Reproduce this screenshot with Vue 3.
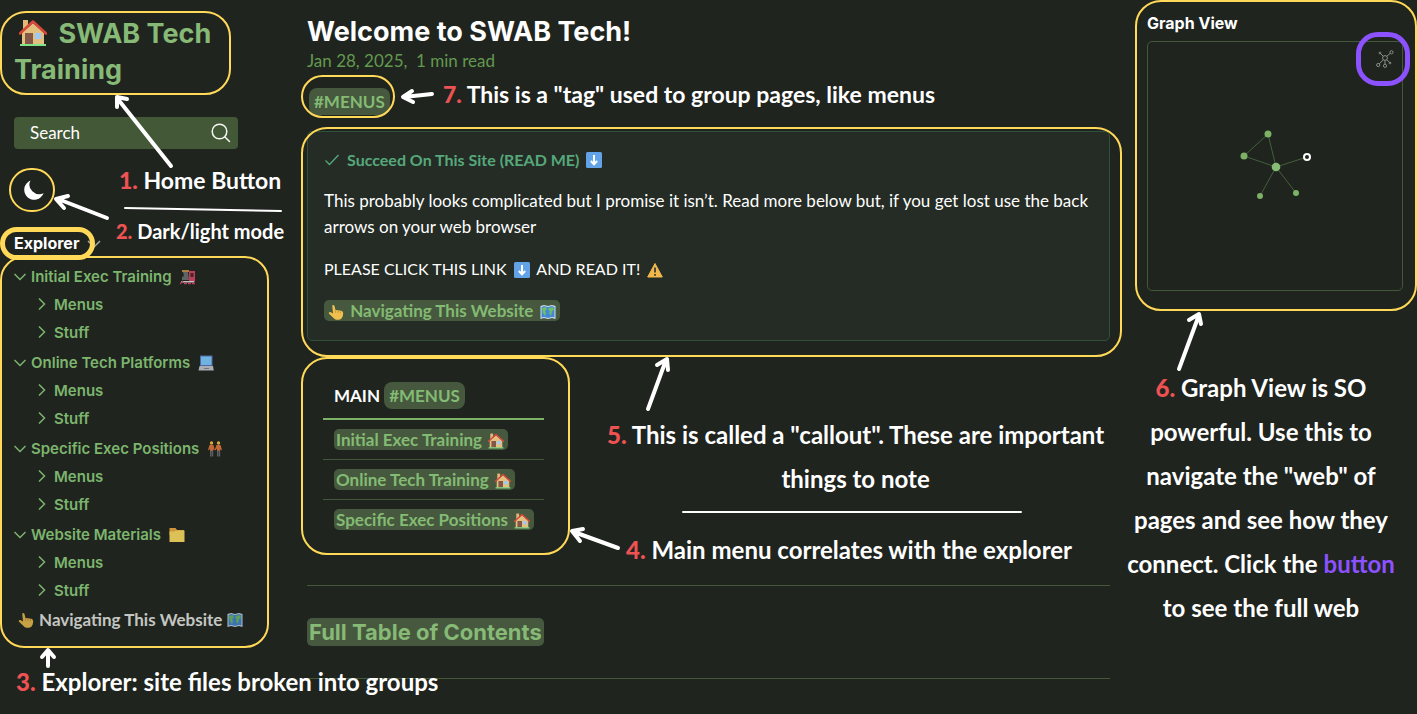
<script setup>
const groups = [
  { name: 'Initial Exec Training', icon: 'train' },
  { name: 'Online Tech Platforms', icon: 'laptop' },
  { name: 'Specific Exec Positions', icon: 'people' },
  { name: 'Website Materials', icon: 'folder' }
]
const children = ['Menus', 'Stuff']
const menuRows = ['Initial Exec Training', 'Online Tech Training', 'Specific Exec Positions']

const hub = { x: 128, y: 125 }
const nodes = [
  { x: 120, y: 92, r: 3.5 },
  { x: 96, y: 114, r: 3.5 },
  { x: 112, y: 154, r: 3 },
  { x: 148, y: 151, r: 3 }
]
</script>

<template>
  <div class="page">
    <svg class="defs" width="0" height="0" aria-hidden="true">
      <symbol id="e-house" viewBox="0 0 28 28">
        <rect x="4" y="1" width="5" height="12" fill="#e0b878" />
        <path d="M3 14 14 4l11 10v12H3z" fill="#e3c07f" />
        <path d="M1 14.500 14 2.500l13 12" fill="none" stroke="#d8473c" stroke-width="2.600" stroke-linecap="round" stroke-linejoin="round" />
        <rect x="6" y="14" width="8" height="12" fill="#855748" />
        <rect x="16" y="14" width="6" height="6" fill="#9ec9f7" />
        <path d="M1 25h26v2H1z" fill="#82e288" />
      </symbol>
      <symbol id="e-down" viewBox="0 0 16 16">
        <rect width="16" height="16" rx="1.500" fill="#62a3e8" />
        <path d="M8 3v9M4.800 9 8 12.300 11.200 9" fill="none" stroke="#fff" stroke-width="2" />
      </symbol>
      <symbol id="e-warn" viewBox="0 0 16 16">
        <path d="M8 1.500 15.300 15H.7z" fill="#f2b84b" stroke="#f2b84b" stroke-linejoin="round" />
        <path d="M8 5.500v5M8 12v1.800" stroke="#333" stroke-width="1.700" />
      </symbol>
      <symbol id="e-hand" viewBox="0 0 16 16">
        <path d="M4.200 1.500q1.300-1 2.200.3L7.500 6l6 .8q1.800.6 1.700 2.600l-.5 3.200Q13.800 15.500 11 15.700H8q-1.600-.2-2.500-1.600L.8 9.500q-.4-1.700 1.500-1.600L5 9.400z" fill="#efc04f" />
        <path d="M7.500 6.500v2.200M10 7v2M12.500 7.200v1.900" stroke="#c48f35" stroke-width=".8" />
      </symbol>
      <symbol id="e-map" viewBox="0 0 16 16">
        <path d="M.5 2 4 1l4 1 4-1 3.500 1v13L12 14l-4 1-4-1-3.500 1z" fill="#d7e3ee" />
        <path d="M1.500 3 4 2l4 1 4-1 2.500 1v10.500L12 13l-4 1-4-1-2.500.8z" fill="#4389d6" />
        <path d="M2 4l4-1 1 2-2 2 1 2-1 3-2-3zM9 4l4-1 1 3-2 1-1 5-2-3 1-2-2-1z" fill="#6fbf68" />
      </symbol>
      <symbol id="e-train" viewBox="0 0 16 16">
        <path d="M2 1h7v2H2z" fill="#b78945" />
        <path d="M3 3h5l1 8H2V8l2-1z" fill="#666a6c" />
        <path d="M9 2h6v11H9z" fill="#cc4260" />
        <path d="M10.500 4h3v4h-3z" fill="#4e2230" />
        <path d="M1 12h13v1.500H1z" fill="#d5d5d5" />
        <path d="M0 15l3-3M4 14.500h3M8 14.500h3M12 14.500h3" stroke="#cc4260" stroke-width="1.300" />
      </symbol>
      <symbol id="e-laptop" viewBox="0 0 16 16">
        <path d="M2 .5h12.500V11H2z" fill="#5273b8" />
        <path d="M3 1.500h10.500V10H3z" fill="#79c2f5" />
        <path d="M1.500 11h13.500l.8 4.500H.5z" fill="#b9bcc2" />
        <path d="M6 13.500h5" stroke="#7c7f87" />
      </symbol>
      <symbol id="e-people" viewBox="0 0 16 16">
        <circle cx="4.500" cy="2" r="1.700" fill="#f0b840" />
        <circle cx="11.500" cy="2" r="1.700" fill="#f0b840" />
        <path d="M2.500 4h4l1.200 5-.9.300L6 8v2H3V7.500l-1 1.700-1-.3zM9.500 4h4l1.500 5-1 .3L13 8v2h-3V7.500l-1.500 2-.8-.7z" fill="#d5703a" />
        <path d="M3.700 9.500v6M5.500 9.500v6M10.700 9.500v6M12.500 9.500v6" stroke="#64676a" stroke-width="1.400" />
      </symbol>
      <symbol id="e-folder" viewBox="0 0 16 16">
        <path d="M.5 1h6l1.500 2h7v5H.5z" fill="#e2a33c" />
        <path d="M.5 4.500h5L7 3.500h8.500v11.500H.5z" fill="#f0d35d" />
      </symbol>
    </svg>

    <aside class="left">
      <h2 class="site-title ring-host">
        <a href="#home"><svg class="house"><use href="#e-house" /></svg> SWAB Tech Training</a>
        <span class="ring ring-title"></span>
      </h2>

      <button type="button" class="search">
        <span>Search</span>
        <svg width="20" height="20" viewBox="0 0 20 20" fill="none" stroke="#f4f6f2" stroke-width="1.500" stroke-linecap="round">
          <circle cx="8.500" cy="8.500" r="7.300" />
          <path d="m14 14 4.500 4.500" />
        </svg>
      </button>

      <button type="button" class="mode ring-host" aria-label="Dark mode">
        <svg width="20" height="20" viewBox="0 0 20 20"><path d="M6.500.500A10 10 0 1 0 19.600 13.300 10 9.500 0 0 1 6.500.500z" fill="#fff" /></svg>
        <span class="ring ring-mode"></span>
      </button>

      <button type="button" class="explorer ring-host">
        <span>Explorer</span>
        <svg width="14" height="10" viewBox="0 0 14 10" fill="none" stroke="#a5a8a3" stroke-width="1.500"><path d="m1 2 6 6 6-6" /></svg>
        <span class="ring ring-explorer"></span>
      </button>

      <nav class="tree ring-host">
        <div v-for="g in groups" :key="g.name" class="group">
          <button type="button" class="folder">
            <svg width="12" height="8" viewBox="0 0 12 8" class="chev"><path d="m.5 1 5.500 5.500L11.500 1" /></svg>
            <span>{{ g.name }}</span>
            <svg class="emoji dim"><use :href="'#e-' + g.icon" /></svg>
          </button>
          <button v-for="c in children" :key="c" type="button" class="folder sub">
            <svg width="8" height="12" viewBox="0 0 8 12" class="chev"><path d="m1 .5 5.500 5.500L1 11.500" /></svg>
            <span>{{ c }}</span>
          </button>
        </div>
        <a href="#navigating" class="nav-file">
          <svg class="emoji"><use href="#e-hand" /></svg>
          <span>Navigating This Website</span>
          <svg class="emoji"><use href="#e-map" /></svg>
        </a>
        <span class="ring ring-tree"></span>
      </nav>

      <svg class="arrows" width="307" height="714" viewBox="0 0 307 714">
        <path d="M171 166 117 98M117 107V97l10 2" />
        <path d="m107 218-49-19M64 208l-8-9 12-3" />
        <path d="M48 666v-15M42 657l6-7 6 7" />
        <path class="thin" d="m125 208 156 3" />
      </svg>
      <p class="note n1"><b>1.</b> Home Button</p>
      <p class="note n2"><b>2.</b> Dark/light mode</p>
      <p class="note n3"><b>3.</b> Explorer: site files broken into groups</p>
    </aside>

    <main class="center">
      <h1>Welcome to SWAB Tech!</h1>
      <p class="meta">Jan 28, 2025,&nbsp; 1 min read</p>
      <div class="tags">
        <span class="ring-host"><a href="#menus" class="tag">#MENUS</a><span class="ring ring-tag"></span></span>
      </div>

      <section class="callout ring-host">
        <h4>
          <svg width="16" height="16" viewBox="0 0 16 16" fill="none" stroke="#56a87b" stroke-width="1.300"><path d="m1.500 8.500 4 4L14.500 3" /></svg>
          <span>Succeed On This Site (READ ME)</span>
          <svg class="emoji"><use href="#e-down" /></svg>
        </h4>
        <p>This probably looks complicated but I promise it isn’t. Read more below but, if you get lost use the back arrows on your web browser</p>
        <p class="caps">PLEASE CLICK THIS LINK <svg class="emoji"><use href="#e-down" /></svg> AND READ IT! <svg class="emoji"><use href="#e-warn" /></svg></p>
        <p><a href="#navigating" class="hl"><svg class="emoji"><use href="#e-hand" /></svg> Navigating This Website <svg class="emoji"><use href="#e-map" /></svg></a></p>
        <span class="ring ring-callout"></span>
      </section>

      <div class="menu ring-host">
        <table>
          <thead>
            <tr><th>MAIN <a href="#menus" class="tag">#MENUS</a></th></tr>
          </thead>
          <tbody>
            <tr v-for="m in menuRows" :key="m">
              <td><a href="#page" class="hl">{{ m }} <svg class="emoji"><use href="#e-house" /></svg></a></td>
            </tr>
          </tbody>
        </table>
        <span class="ring ring-menu"></span>
      </div>

      <hr />
      <h2 class="toc"><a href="#contents">Full Table of Contents</a></h2>
      <hr />

      <svg class="arrows" width="803" height="714" viewBox="307 0 803 714">
        <path d="m432 94-28 3M412 91l-9 6 10 5" />
        <path d="m648 409 18-49M657 365l10-6 1 11" />
        <path d="m618 548-44-16M580 541l-8-10 11-2" />
        <path class="thin" d="M683 512h338" />
      </svg>
      <p class="note n7"><b>7.</b> This is a "tag" used to group pages, like menus</p>
      <p class="note n5"><b>5.</b> This is called a "callout". These are important<br />things to note</p>
      <p class="note n4"><b>4.</b> Main menu correlates with the explorer</p>
    </main>

    <aside class="right">
      <div class="graph-wrap ring-host">
        <h3>Graph View</h3>
        <div class="graph">
          <svg class="net" width="254" height="248" viewBox="0 0 254 248">
            <g stroke="#44603a" stroke-width="1">
              <line v-for="(n, i) in nodes" :key="i" :x1="hub.x" :y1="hub.y" :x2="n.x" :y2="n.y" />
              <line x1="120" y1="92" x2="96" y2="114" />
              <line :x1="hub.x" :y1="hub.y" x2="159" y2="115" />
            </g>
            <circle v-for="(n, i) in nodes" :key="'c' + i" :cx="n.x" :cy="n.y" :r="n.r" fill="#7cb265" />
            <circle :cx="hub.x" :cy="hub.y" r="4.300" fill="#87bd76" />
            <circle cx="159" cy="115" r="3" fill="#1f241f" stroke="#fff" stroke-width="2" />
          </svg>
          <button type="button" class="global" aria-label="Open full graph">
            <svg width="18" height="18" viewBox="0 0 18 18" fill="none" stroke="#8b8f89" stroke-width="1">
              <circle cx="9" cy="8" r="2.400" />
              <circle cx="15.500" cy="2.300" r="1.600" />
              <circle cx="2.200" cy="15" r="1.600" />
              <circle cx="9" cy="15.800" r="1.600" />
              <circle cx="14" cy="13" r=".9" />
              <circle cx="4" cy="3" r=".9" />
              <path d="m10.700 6.300 3.600-3M7.300 9.800l-4 4M9 10.400v3.800M10.800 9.700l2.600 2.600M7.300 6.300 4.700 3.700" />
            </svg>
            <span class="ring ring-purple"></span>
          </button>
        </div>
        <span class="ring ring-graph"></span>
      </div>

      <svg class="arrows" width="307" height="714" viewBox="1110 0 307 714">
        <path d="m1179 369 20-54M1189 320l10-6 2 10" />
      </svg>
      <p class="note n6"><b>6.</b> Graph View is SO<br />powerful. Use this to<br />navigate the "web" of<br />pages and see how they<br />connect. Click the <em>button</em><br />to see the full web</p>
    </aside>
  </div>
</template>

<style>
body {
  background: #20241f;
}
</style>

<style scoped>
.page {
  display: grid;
  grid-template-columns: 307px minmax(0, 1fr) 307px;
  min-height: 100vh;
  background: #20241f;
  color: #fff;
  font: 17px/26px Lato, "Noto Sans", sans-serif;
}
.page * {
  box-sizing: border-box;
}
h1, h2, h3, h4, p {
  margin: 0;
}
a {
  color: inherit;
  text-decoration: none;
}
button {
  display: flex;
  align-items: center;
  border: 0;
  padding: 0;
  background: none;
  color: inherit;
  font: inherit;
  text-align: left;
  cursor: pointer;
}
.defs {
  position: absolute;
}
.left, .center, .right {
  position: relative;
}
.left {
  z-index: 2;
  padding: 16px 37px 0 14px;
}
.center {
  z-index: 1;
  padding-top: 14px;
}
.right {
  padding: 10px 14px 0 37px;
}
.emoji {
  flex: none;
  width: 16px;
  height: 16px;
  vertical-align: -3px;
}
p .emoji, td .emoji {
  margin: 0 2px;
}
.caps .emoji {
  margin: 0 3px;
}
.dim {
  opacity: 0.9;
}

/* Highlight rings */
.ring-host {
  position: relative;
}
.ring {
  position: absolute;
  border: 2px solid #ffd957;
  border-radius: 24px;
  pointer-events: none;
}
.ring-title { inset: -5px 7px -7px -14px; border-radius: 26px; }
.ring-mode { inset: -12px -11px -12px -15px; }
.ring-explorer { inset: -4px 6px -4px -14px; border-width: 5px; border-radius: 17px; }
.ring-tree { inset: -7px 1px -15px -14px; }
.ring-tag { inset: -13px -5px -3px -8px; border-radius: 22px; }
.ring-callout { inset: -5px -13px -17px -7px; border-radius: 26px; }
.ring-menu { inset: 0; border-radius: 26px; }
.ring-graph { inset: -10px -14px -20px -12px; border-radius: 26px; }
.ring-purple { inset: -18px -16px -18px -20px; border: 5px solid #8c52ff; border-radius: 22px; }

/* Sidebar */
.site-title {
  width: 224px;
  color: #86ba76;
  font: 700 27px/36px Inter, sans-serif;
}
.house {
  width: 28px;
  height: 28px;
  margin: 0 5px;
  vertical-align: -4px;
}
.search {
  justify-content: space-between;
  width: 224px;
  height: 32px;
  margin-top: 29px;
  padding: 0 7px 0 16px;
  border-radius: 4px;
  background: #425836;
}
.mode {
  width: 20px;
  height: 20px;
  margin: 31px 0 0 10px;
}
.explorer {
  gap: 8px;
  height: 25px;
  margin-top: 31px;
  font: 700 16px/25px Inter, sans-serif;
}
.tree {
  margin-top: 7px;
}
.group {
  padding-bottom: 3px;
}
.folder {
  gap: 5px;
  height: 27px;
  color: #7cb56d;
  font: 600 15px/27px Inter, sans-serif;
}
.folder .emoji {
  margin-left: 3px;
}
.sub {
  gap: 8px;
  height: 28px;
  padding-left: 24px;
}
.chev {
  fill: none;
  stroke: #7cb56d;
  stroke-width: 1.5;
}
.nav-file {
  display: flex;
  align-items: center;
  gap: 5px;
  height: 26px;
  padding-left: 4px;
  color: #c4c6c2;
  font-weight: 700;
  white-space: nowrap;
}
.nav-file .emoji {
  opacity: 0.8;
}

/* Article */
h1 {
  font: 700 27px/36px Inter, sans-serif;
}
.meta {
  height: 22px;
  color: #62994f;
  line-height: 22px;
}
.tags {
  display: flex;
  padding: 16px 0 16px 2px;
}
.tags .ring-host {
  display: flex;
}
.tag, .hl {
  border-radius: 5px;
  background: #46583d;
  color: #84bb74;
  font-weight: 700;
}
.tag {
  display: inline-block;
  padding: 1px 5px;
  border-radius: 8px;
  line-height: 25px;
}
.hl {
  padding: 0 2px;
}
.callout {
  display: grid;
  gap: 16px;
  padding: 16px;
  border: 1px solid #31503a;
  border-radius: 5px;
  background: #242c25;
}
.callout h4 {
  display: flex;
  align-items: center;
  gap: 7px;
  color: #56a87b;
  font: inherit;
  font-weight: 700;
  font-size: 16px;
  line-height: 24px;
}
.caps {
  font-size: 16px;
}
.menu {
  width: 269px;
  margin: 16px 0 30px -6px;
  padding: 19px 26px 16px 22px;
}
table {
  width: 100%;
  border-collapse: collapse;
}
th {
  padding: 6px 11px 9px;
  border-bottom: 2px solid #7cb265;
  text-align: left;
}
td {
  padding: 7px 0 6px 11px;
  border-bottom: 1px solid #425836;
  white-space: nowrap;
}
tr:last-child td {
  border-bottom: 0;
}
hr {
  height: 1px;
  margin: 0;
  border: 0;
  background: #425836;
}
.toc {
  margin: 32px 0;
  color: #86ba76;
  font: 700 22px/28px Inter, sans-serif;
}
.toc a {
  display: inline-block;
  padding: 0 2px;
  border-radius: 5px;
  background: #46583d;
}

/* Graph */
h3 {
  height: 31px;
  font: 700 16px/27px Inter, sans-serif;
}
.graph {
  position: relative;
  height: 250px;
  border: 1px solid #425836;
  border-radius: 5px;
}
.net {
  display: block;
  width: 100%;
}
.global {
  position: absolute;
  top: 8px;
  right: 8px;
}

/* Handwritten notes */
.arrows {
  position: absolute;
  top: 0;
  left: 0;
  overflow: visible;
  pointer-events: none;
  fill: none;
  stroke: #fff;
  stroke-width: 4;
  stroke-linecap: round;
  stroke-linejoin: round;
}
.thin {
  stroke-width: 2;
}
.note {
  position: absolute;
  font: 700 24px/44px Lato, sans-serif;
  white-space: nowrap;
}
.note b {
  color: #ee5253;
}
.note em {
  color: #8c52ff;
  font-style: normal;
}
.n1 { top: 158px; left: 119px; font-size: 23px; }
.n2 { top: 209px; left: 116px; font-size: 20px; }
.n3 { top: 660px; left: 16px; }
.n4 { top: 528px; left: 319px; }
.n5 { top: 413px; left: 300px; text-align: center; }
.n6 { top: 366px; left: 0; width: 302px; text-align: center; }
.n7 { top: 72px; left: 136px; font-size: 23px; }
</style>
